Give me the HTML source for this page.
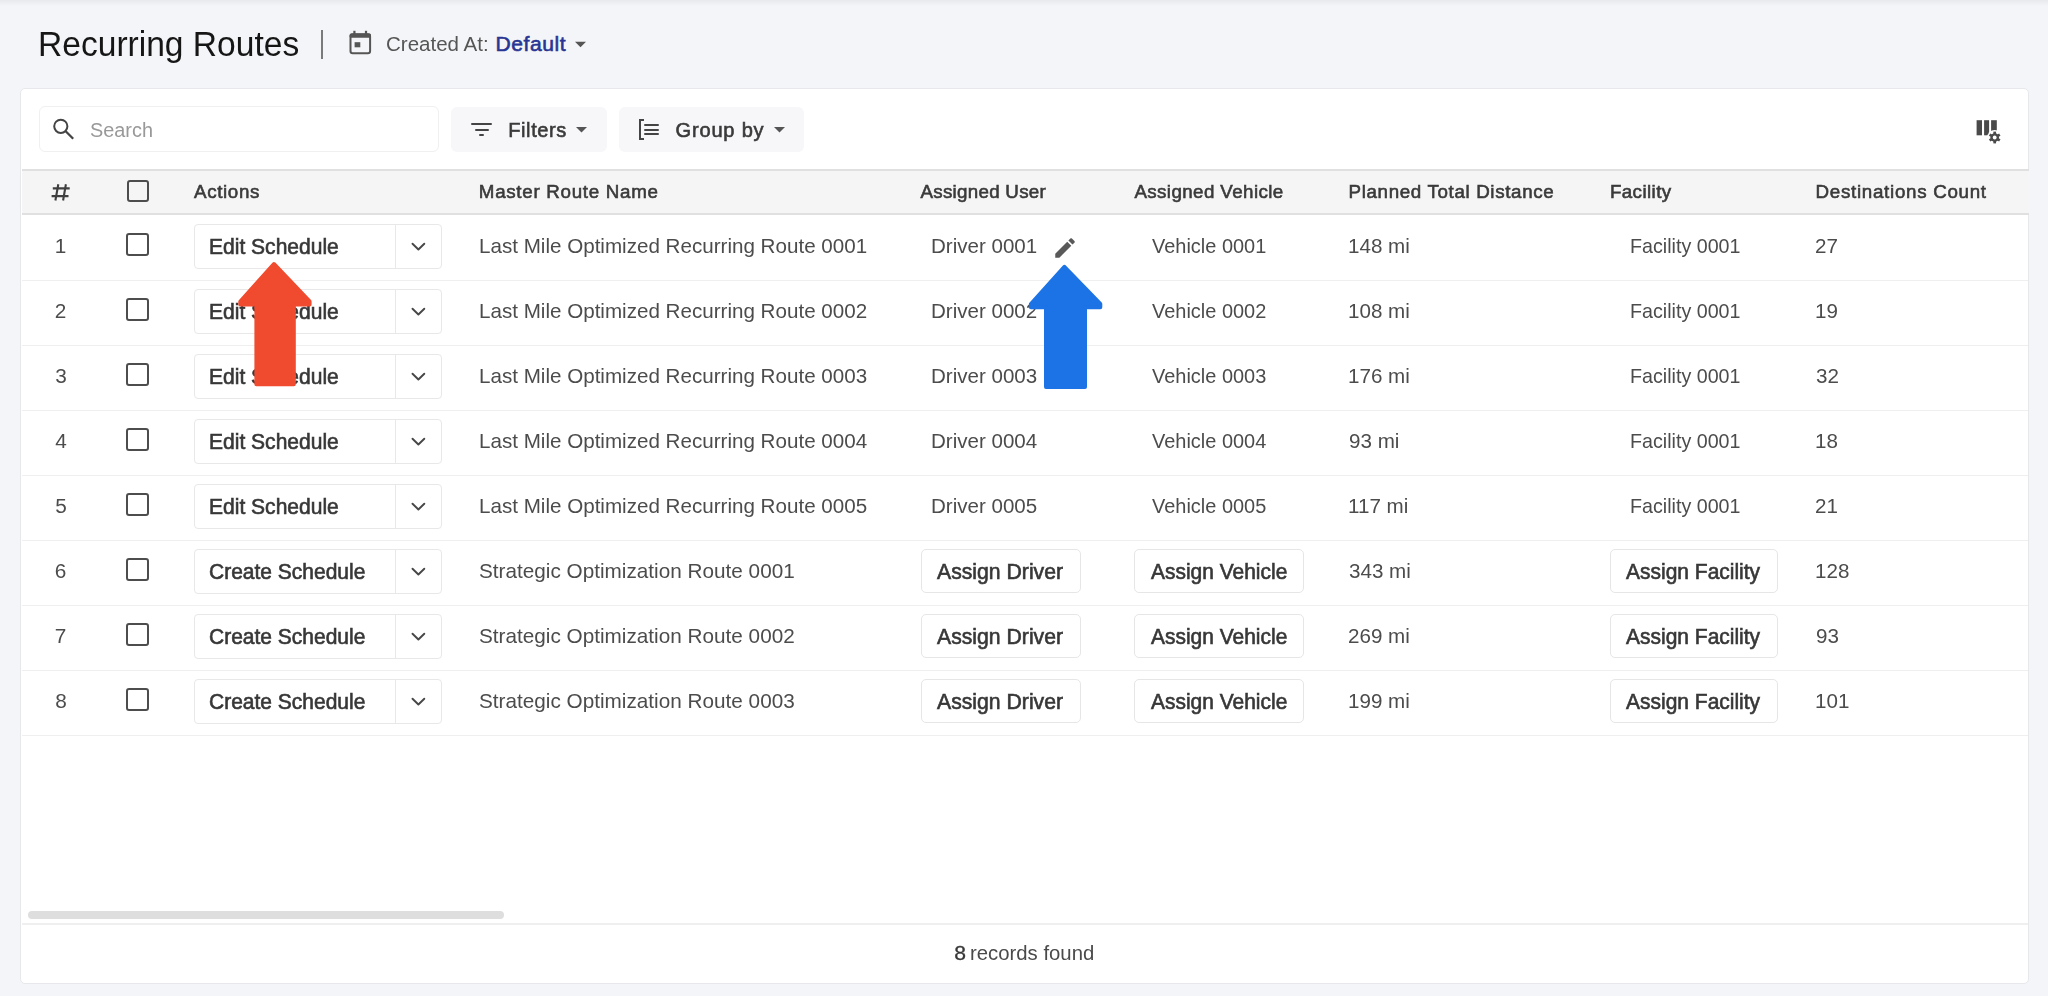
<!DOCTYPE html>
<html><head><meta charset="utf-8">
<style>
html,body{margin:0;padding:0}
body{width:2048px;height:996px;overflow:hidden;background:#f4f5f8;position:relative;font-family:"Liberation Sans",sans-serif}
.a{position:absolute;box-sizing:border-box}
.t{position:absolute;white-space:nowrap;line-height:0;font-family:"Liberation Sans",sans-serif}
.cb{position:absolute;width:23px;height:23px;border:2px solid #4d4d4d;border-radius:3px;box-sizing:border-box;left:126.5px}
.sb{position:absolute;left:194px;width:248px;height:44.5px;border:1.3px solid #e8e8e8;border-radius:4px;box-sizing:border-box;background:#fff}
.sb i{position:absolute;left:200px;top:0;bottom:0;width:1.3px;background:#e8e8e8}
.ab{position:absolute;height:44px;border:1.3px solid #e6e6e6;border-radius:5px;box-sizing:border-box;background:#fff}
.sep{position:absolute;left:22px;width:2006px;height:1.3px;background:#efefef}
svg{position:absolute;overflow:visible}
</style></head><body>
<!-- header -->
<div class="a" style="left:321px;top:29.5px;width:2px;height:29px;background:#7a7a7a"></div>
<svg style="left:0;top:0" width="400" height="80"><g fill="#555"><rect x="350.5" y="34.3" width="19.6" height="19" rx="2.2" fill="none" stroke="#555" stroke-width="2"/><rect x="349.6" y="33.4" width="21.4" height="4.4" rx="1.5"/><rect x="353.3" y="30.8" width="2.2" height="4"/><rect x="364.9" y="30.8" width="2.2" height="4"/><rect x="354.6" y="42.2" width="5.7" height="5.1"/></g></svg>
<svg style="left:575px;top:41px" width="11" height="7" viewBox="0 0 10 5"><path fill="#555" d="M0 0h10L5 5z"/></svg>
<!-- card -->
<div class="a" style="left:0;top:0;width:2048px;height:6px;background:linear-gradient(#e8e9ed,#f4f5f8)"></div>
<div class="a" style="left:20px;top:87.6px;width:2008.5px;height:896.4px;background:#fff;border:1.6px solid #e7e8ec;border-radius:5px"></div>
<!-- search -->
<div class="a" style="left:39px;top:106px;width:400px;height:46px;border:1.3px solid #f0f0f2;border-radius:6px;background:#fff"></div>
<svg style="left:0;top:0" width="100" height="160"><circle cx="60.8" cy="126.3" r="6.6" fill="none" stroke="#444" stroke-width="2"/><path d="M65.7 131.2 L73.2 138.7" stroke="#444" stroke-width="2.3"/></svg>
<!-- filters -->
<div class="a" style="left:451px;top:106.5px;width:156px;height:45px;border-radius:6px;background:#f7f7fa"></div>
<div class="a" style="left:471px;top:122.6px;width:21.2px;height:2px;background:#444;border-radius:1px"></div>
<div class="a" style="left:474.8px;top:128.5px;width:14.1px;height:2px;background:#444;border-radius:1px"></div>
<div class="a" style="left:479.4px;top:134.4px;width:4.7px;height:2px;background:#444;border-radius:1px"></div>
<svg style="left:575.8px;top:127.2px" width="11" height="5.5" viewBox="0 0 10 5"><path fill="#555" d="M0 0h10L5 5z"/></svg>
<!-- group by -->
<div class="a" style="left:619px;top:106.5px;width:185px;height:45px;border-radius:6px;background:#f7f7fa"></div>
<div class="a" style="left:639.3px;top:119.2px;width:2.1px;height:20.6px;background:#444"></div>
<div class="a" style="left:639px;top:119.3px;width:5px;height:2px;background:#444"></div>
<div class="a" style="left:639px;top:138.3px;width:5px;height:2px;background:#444"></div>
<div class="a" style="left:644.2px;top:123.8px;width:15.3px;height:1.9px;background:#444;border-radius:1px"></div>
<div class="a" style="left:644.2px;top:128.7px;width:15.3px;height:1.9px;background:#444;border-radius:1px"></div>
<div class="a" style="left:644.2px;top:133.3px;width:15.3px;height:1.9px;background:#444;border-radius:1px"></div>
<svg style="left:773.7px;top:127.2px" width="11" height="5.5" viewBox="0 0 10 5"><path fill="#555" d="M0 0h10L5 5z"/></svg>
<!-- column settings icon -->
<svg style="left:0;top:0" width="2048" height="200">
<rect x="1976.6" y="120.2" width="5.4" height="15.1" fill="#4a4a4a"/>
<rect x="1984.1" y="120.2" width="5" height="15.1" fill="#4a4a4a"/>
<rect x="1991.1" y="120.2" width="5.7" height="15.1" fill="#4a4a4a"/>
<circle cx="1994.7" cy="137.5" r="7.6" fill="#fff"/>
<g transform="translate(1994.7,137.5)" fill="#4a4a4a">
<circle r="4.3"/>
<rect x="-1.35" y="-5.9" width="2.7" height="11.8"/>
<rect x="-1.35" y="-5.9" width="2.7" height="11.8" transform="rotate(60)"/>
<rect x="-1.35" y="-5.9" width="2.7" height="11.8" transform="rotate(120)"/>
<circle r="1.9" fill="#fff"/>
</g>
</svg>
<!-- table header -->
<div class="a" style="left:21.5px;top:169px;width:2007px;height:46px;background:#f5f5f5;border-top:2px solid #e0e0e0;border-bottom:2px solid #e0e0e0"></div>
<div class="cb" style="top:179.7px;left:126.7px;width:22px;height:22px"></div>
<div class="sep" style="top:279.6px"></div>
<div class="cb" style="top:232.8px;left:126.3px"></div>
<div class="sb" style="top:224.3px"><i></i></div>
<svg style="left:411px;top:241.5px" width="15" height="10" viewBox="0 0 15 10"><path d="M1.5 1.7 L7.4 7.5 L13.3 1.7" fill="none" stroke="#474747" stroke-width="1.9" stroke-linecap="round" stroke-linejoin="round"/></svg>
<div class="sep" style="top:344.6px"></div>
<div class="cb" style="top:297.8px;left:126.3px"></div>
<div class="sb" style="top:289.3px"><i></i></div>
<svg style="left:411px;top:306.5px" width="15" height="10" viewBox="0 0 15 10"><path d="M1.5 1.7 L7.4 7.5 L13.3 1.7" fill="none" stroke="#474747" stroke-width="1.9" stroke-linecap="round" stroke-linejoin="round"/></svg>
<div class="sep" style="top:409.6px"></div>
<div class="cb" style="top:362.8px;left:126.3px"></div>
<div class="sb" style="top:354.3px"><i></i></div>
<svg style="left:411px;top:371.5px" width="15" height="10" viewBox="0 0 15 10"><path d="M1.5 1.7 L7.4 7.5 L13.3 1.7" fill="none" stroke="#474747" stroke-width="1.9" stroke-linecap="round" stroke-linejoin="round"/></svg>
<div class="sep" style="top:474.6px"></div>
<div class="cb" style="top:427.8px;left:126.3px"></div>
<div class="sb" style="top:419.3px"><i></i></div>
<svg style="left:411px;top:436.5px" width="15" height="10" viewBox="0 0 15 10"><path d="M1.5 1.7 L7.4 7.5 L13.3 1.7" fill="none" stroke="#474747" stroke-width="1.9" stroke-linecap="round" stroke-linejoin="round"/></svg>
<div class="sep" style="top:539.6px"></div>
<div class="cb" style="top:492.8px;left:126.3px"></div>
<div class="sb" style="top:484.3px"><i></i></div>
<svg style="left:411px;top:501.5px" width="15" height="10" viewBox="0 0 15 10"><path d="M1.5 1.7 L7.4 7.5 L13.3 1.7" fill="none" stroke="#474747" stroke-width="1.9" stroke-linecap="round" stroke-linejoin="round"/></svg>
<div class="sep" style="top:604.6px"></div>
<div class="cb" style="top:557.8px;left:126.3px"></div>
<div class="sb" style="top:549.3px"><i></i></div>
<svg style="left:411px;top:566.5px" width="15" height="10" viewBox="0 0 15 10"><path d="M1.5 1.7 L7.4 7.5 L13.3 1.7" fill="none" stroke="#474747" stroke-width="1.9" stroke-linecap="round" stroke-linejoin="round"/></svg>
<div class="ab" style="left:920.5px;width:160px;top:548.8px"></div>
<div class="ab" style="left:1134.3px;width:169.5px;top:548.8px"></div>
<div class="ab" style="left:1609.8px;width:168px;top:548.8px"></div>
<div class="sep" style="top:669.6px"></div>
<div class="cb" style="top:622.8px;left:126.3px"></div>
<div class="sb" style="top:614.3px"><i></i></div>
<svg style="left:411px;top:631.5px" width="15" height="10" viewBox="0 0 15 10"><path d="M1.5 1.7 L7.4 7.5 L13.3 1.7" fill="none" stroke="#474747" stroke-width="1.9" stroke-linecap="round" stroke-linejoin="round"/></svg>
<div class="ab" style="left:920.5px;width:160px;top:613.8px"></div>
<div class="ab" style="left:1134.3px;width:169.5px;top:613.8px"></div>
<div class="ab" style="left:1609.8px;width:168px;top:613.8px"></div>
<div class="sep" style="top:734.6px"></div>
<div class="cb" style="top:687.8px;left:126.3px"></div>
<div class="sb" style="top:679.3px"><i></i></div>
<svg style="left:411px;top:696.5px" width="15" height="10" viewBox="0 0 15 10"><path d="M1.5 1.7 L7.4 7.5 L13.3 1.7" fill="none" stroke="#474747" stroke-width="1.9" stroke-linecap="round" stroke-linejoin="round"/></svg>
<div class="ab" style="left:920.5px;width:160px;top:678.8px"></div>
<div class="ab" style="left:1134.3px;width:169.5px;top:678.8px"></div>
<div class="ab" style="left:1609.8px;width:168px;top:678.8px"></div>
<svg style="left:0;top:0" width="100" height="220"><g stroke="#3f3f3f" stroke-width="2.1"><path d="M58.3 184.3 L55.4 200.5 M65.9 184.3 L63.1 200.5 M52.8 188.4 H69.7 M51.6 196.1 H68.5"/></g></svg>
<svg style="left:1051.9px;top:234.7px" width="26" height="26" viewBox="0 0 24 24"><path fill="#595959" d="M3 17.25V21h3.75L17.81 9.94l-3.75-3.75L3 17.25zM20.71 7.04c.39-.39.39-1.02 0-1.41l-2.34-2.34c-.39-.39-1.02-.39-1.41 0l-1.83 1.83 3.75 3.75 1.83-1.83z"/></svg>
<!-- scrollbar -->
<div class="a" style="left:28px;top:910.7px;width:476px;height:8.3px;border-radius:4.2px;background:#dedede"></div>
<div class="a" style="left:22px;top:923.3px;width:2006px;height:1.8px;background:#efefef"></div>
<div style="position:absolute;left:0;top:0;width:2048px;height:996px;filter:grayscale(1)"><div class="t" style="left:37.60px;top:43.73px;font-size:35.40px;color:#161616;transform:scaleX(0.9487);transform-origin:0 0">Recurring Routes</div>
<div class="t" style="left:386.03px;top:44.00px;font-size:21.08px;color:#555555;transform:scaleX(0.9734);transform-origin:0 0">Created At:</div>
<div class="t" style="left:90.20px;top:130.35px;font-size:20.35px;color:#999999;transform:scaleX(0.9771);transform-origin:0 0">Search</div>
<div class="t" style="left:508.30px;top:129.95px;font-size:20.06px;color:#3a3a3a;-webkit-text-stroke:0.60px #3a3a3a;letter-spacing:0.559px">Filters</div>
<div class="t" style="left:675.60px;top:129.95px;font-size:20.06px;color:#3a3a3a;-webkit-text-stroke:0.60px #3a3a3a;letter-spacing:0.795px">Group by</div>
<div class="t" style="left:954.30px;top:952.50px;font-size:21.08px;color:#383838;-webkit-text-stroke:0.35px #383838;letter-spacing:0.000px">8</div>
<div class="t" style="left:969.64px;top:952.50px;font-size:21.08px;color:#4a4a4a;transform:scaleX(0.9641);transform-origin:0 0">records found</div>
<div class="t" style="left:194.00px;top:192.00px;font-size:18.75px;color:#3a3a3a;-webkit-text-stroke:0.60px #3a3a3a;letter-spacing:0.648px">Actions</div>
<div class="t" style="left:478.80px;top:192.00px;font-size:18.75px;color:#3a3a3a;-webkit-text-stroke:0.60px #3a3a3a;letter-spacing:0.716px">Master Route Name</div>
<div class="t" style="left:920.50px;top:192.00px;font-size:18.75px;color:#3a3a3a;-webkit-text-stroke:0.60px #3a3a3a;letter-spacing:0.276px">Assigned User</div>
<div class="t" style="left:1134.40px;top:192.00px;font-size:18.75px;color:#3a3a3a;-webkit-text-stroke:0.60px #3a3a3a;letter-spacing:0.402px">Assigned Vehicle</div>
<div class="t" style="left:1348.50px;top:192.00px;font-size:18.75px;color:#3a3a3a;-webkit-text-stroke:0.60px #3a3a3a;letter-spacing:0.654px">Planned Total Distance</div>
<div class="t" style="left:1609.90px;top:192.00px;font-size:18.75px;color:#3a3a3a;-webkit-text-stroke:0.60px #3a3a3a;letter-spacing:0.420px">Facility</div>
<div class="t" style="left:1815.60px;top:192.00px;font-size:18.75px;color:#3a3a3a;-webkit-text-stroke:0.60px #3a3a3a;letter-spacing:0.705px">Destinations Count</div>
<div class="t" style="left:54.84px;top:246.20px;font-size:20.78px;color:#4c4c4c;letter-spacing:0.000px">1</div>
<div class="t" style="left:208.51px;top:246.65px;font-size:21.22px;color:#373737;-webkit-text-stroke:0.60px #373737;transform:scaleX(0.9912);transform-origin:0 0">Edit Schedule</div>
<div class="t" style="left:479.41px;top:246.20px;font-size:20.78px;color:#4c4c4c;transform:scaleX(0.9920);transform-origin:0 0">Last Mile Optimized Recurring Route 0001</div>
<div class="t" style="left:931.21px;top:246.20px;font-size:20.78px;color:#4c4c4c;transform:scaleX(0.9888);transform-origin:0 0">Driver 0001</div>
<div class="t" style="left:1151.80px;top:246.20px;font-size:20.78px;color:#4c4c4c;transform:scaleX(0.9613);transform-origin:0 0">Vehicle 0001</div>
<div class="t" style="left:1629.65px;top:246.20px;font-size:20.78px;color:#4c4c4c;transform:scaleX(0.9476);transform-origin:0 0">Facility 0001</div>
<div class="t" style="left:1348.31px;top:246.20px;font-size:20.78px;color:#4c4c4c;transform:scaleX(0.9920);transform-origin:0 0">148 mi</div>
<div class="t" style="left:1815.31px;top:246.20px;font-size:20.78px;color:#4c4c4c;transform:scaleX(0.9920);transform-origin:0 0">27</div>
<div class="t" style="left:54.84px;top:311.20px;font-size:20.78px;color:#4c4c4c;letter-spacing:0.000px">2</div>
<div class="t" style="left:208.51px;top:311.65px;font-size:21.22px;color:#373737;-webkit-text-stroke:0.60px #373737;transform:scaleX(0.9912);transform-origin:0 0">Edit Schedule</div>
<div class="t" style="left:479.41px;top:311.20px;font-size:20.78px;color:#4c4c4c;transform:scaleX(0.9920);transform-origin:0 0">Last Mile Optimized Recurring Route 0002</div>
<div class="t" style="left:931.21px;top:311.20px;font-size:20.78px;color:#4c4c4c;transform:scaleX(0.9888);transform-origin:0 0">Driver 0002</div>
<div class="t" style="left:1151.80px;top:311.20px;font-size:20.78px;color:#4c4c4c;transform:scaleX(0.9613);transform-origin:0 0">Vehicle 0002</div>
<div class="t" style="left:1629.65px;top:311.20px;font-size:20.78px;color:#4c4c4c;transform:scaleX(0.9476);transform-origin:0 0">Facility 0001</div>
<div class="t" style="left:1348.31px;top:311.20px;font-size:20.78px;color:#4c4c4c;transform:scaleX(0.9920);transform-origin:0 0">108 mi</div>
<div class="t" style="left:1815.31px;top:311.20px;font-size:20.78px;color:#4c4c4c;transform:scaleX(0.9920);transform-origin:0 0">19</div>
<div class="t" style="left:55.34px;top:376.20px;font-size:20.78px;color:#4c4c4c;letter-spacing:0.000px">3</div>
<div class="t" style="left:208.51px;top:376.65px;font-size:21.22px;color:#373737;-webkit-text-stroke:0.60px #373737;transform:scaleX(0.9912);transform-origin:0 0">Edit Schedule</div>
<div class="t" style="left:479.41px;top:376.20px;font-size:20.78px;color:#4c4c4c;transform:scaleX(0.9920);transform-origin:0 0">Last Mile Optimized Recurring Route 0003</div>
<div class="t" style="left:931.21px;top:376.20px;font-size:20.78px;color:#4c4c4c;transform:scaleX(0.9888);transform-origin:0 0">Driver 0003</div>
<div class="t" style="left:1151.80px;top:376.20px;font-size:20.78px;color:#4c4c4c;transform:scaleX(0.9613);transform-origin:0 0">Vehicle 0003</div>
<div class="t" style="left:1629.65px;top:376.20px;font-size:20.78px;color:#4c4c4c;transform:scaleX(0.9476);transform-origin:0 0">Facility 0001</div>
<div class="t" style="left:1348.31px;top:376.20px;font-size:20.78px;color:#4c4c4c;transform:scaleX(0.9920);transform-origin:0 0">176 mi</div>
<div class="t" style="left:1816.30px;top:376.20px;font-size:20.78px;color:#4c4c4c;transform:scaleX(0.9920);transform-origin:0 0">32</div>
<div class="t" style="left:55.34px;top:441.20px;font-size:20.78px;color:#4c4c4c;letter-spacing:0.000px">4</div>
<div class="t" style="left:208.51px;top:441.65px;font-size:21.22px;color:#373737;-webkit-text-stroke:0.60px #373737;transform:scaleX(0.9912);transform-origin:0 0">Edit Schedule</div>
<div class="t" style="left:479.41px;top:441.20px;font-size:20.78px;color:#4c4c4c;transform:scaleX(0.9920);transform-origin:0 0">Last Mile Optimized Recurring Route 0004</div>
<div class="t" style="left:931.21px;top:441.20px;font-size:20.78px;color:#4c4c4c;transform:scaleX(0.9888);transform-origin:0 0">Driver 0004</div>
<div class="t" style="left:1151.80px;top:441.20px;font-size:20.78px;color:#4c4c4c;transform:scaleX(0.9613);transform-origin:0 0">Vehicle 0004</div>
<div class="t" style="left:1629.65px;top:441.20px;font-size:20.78px;color:#4c4c4c;transform:scaleX(0.9476);transform-origin:0 0">Facility 0001</div>
<div class="t" style="left:1349.30px;top:441.20px;font-size:20.78px;color:#4c4c4c;transform:scaleX(0.9920);transform-origin:0 0">93 mi</div>
<div class="t" style="left:1815.31px;top:441.20px;font-size:20.78px;color:#4c4c4c;transform:scaleX(0.9920);transform-origin:0 0">18</div>
<div class="t" style="left:55.34px;top:506.20px;font-size:20.78px;color:#4c4c4c;letter-spacing:0.000px">5</div>
<div class="t" style="left:208.51px;top:506.65px;font-size:21.22px;color:#373737;-webkit-text-stroke:0.60px #373737;transform:scaleX(0.9912);transform-origin:0 0">Edit Schedule</div>
<div class="t" style="left:479.41px;top:506.20px;font-size:20.78px;color:#4c4c4c;transform:scaleX(0.9920);transform-origin:0 0">Last Mile Optimized Recurring Route 0005</div>
<div class="t" style="left:931.21px;top:506.20px;font-size:20.78px;color:#4c4c4c;transform:scaleX(0.9888);transform-origin:0 0">Driver 0005</div>
<div class="t" style="left:1151.80px;top:506.20px;font-size:20.78px;color:#4c4c4c;transform:scaleX(0.9613);transform-origin:0 0">Vehicle 0005</div>
<div class="t" style="left:1629.65px;top:506.20px;font-size:20.78px;color:#4c4c4c;transform:scaleX(0.9476);transform-origin:0 0">Facility 0001</div>
<div class="t" style="left:1348.31px;top:506.20px;font-size:20.78px;color:#4c4c4c;transform:scaleX(0.9920);transform-origin:0 0">117 mi</div>
<div class="t" style="left:1815.31px;top:506.20px;font-size:20.78px;color:#4c4c4c;transform:scaleX(0.9920);transform-origin:0 0">21</div>
<div class="t" style="left:54.84px;top:571.20px;font-size:20.78px;color:#4c4c4c;letter-spacing:0.000px">6</div>
<div class="t" style="left:208.51px;top:571.65px;font-size:21.22px;color:#373737;-webkit-text-stroke:0.60px #373737;transform:scaleX(0.9894);transform-origin:0 0">Create Schedule</div>
<div class="t" style="left:479.40px;top:571.20px;font-size:20.78px;color:#4c4c4c;transform:scaleX(0.9983);transform-origin:0 0">Strategic Optimization Route 0001</div>
<div class="t" style="left:937.30px;top:571.65px;font-size:21.22px;color:#373737;-webkit-text-stroke:0.60px #373737;transform:scaleX(0.9992);transform-origin:0 0">Assign Driver</div>
<div class="t" style="left:1151.40px;top:571.65px;font-size:21.22px;color:#373737;-webkit-text-stroke:0.60px #373737;transform:scaleX(0.9876);transform-origin:0 0">Assign Vehicle</div>
<div class="t" style="left:1626.00px;top:571.65px;font-size:21.22px;color:#373737;-webkit-text-stroke:0.60px #373737;transform:scaleX(0.9890);transform-origin:0 0">Assign Facility</div>
<div class="t" style="left:1349.30px;top:571.20px;font-size:20.78px;color:#4c4c4c;transform:scaleX(0.9920);transform-origin:0 0">343 mi</div>
<div class="t" style="left:1815.31px;top:571.20px;font-size:20.78px;color:#4c4c4c;transform:scaleX(0.9920);transform-origin:0 0">128</div>
<div class="t" style="left:54.84px;top:636.20px;font-size:20.78px;color:#4c4c4c;letter-spacing:0.000px">7</div>
<div class="t" style="left:208.51px;top:636.65px;font-size:21.22px;color:#373737;-webkit-text-stroke:0.60px #373737;transform:scaleX(0.9894);transform-origin:0 0">Create Schedule</div>
<div class="t" style="left:479.40px;top:636.20px;font-size:20.78px;color:#4c4c4c;transform:scaleX(0.9983);transform-origin:0 0">Strategic Optimization Route 0002</div>
<div class="t" style="left:937.30px;top:636.65px;font-size:21.22px;color:#373737;-webkit-text-stroke:0.60px #373737;transform:scaleX(0.9992);transform-origin:0 0">Assign Driver</div>
<div class="t" style="left:1151.40px;top:636.65px;font-size:21.22px;color:#373737;-webkit-text-stroke:0.60px #373737;transform:scaleX(0.9876);transform-origin:0 0">Assign Vehicle</div>
<div class="t" style="left:1626.00px;top:636.65px;font-size:21.22px;color:#373737;-webkit-text-stroke:0.60px #373737;transform:scaleX(0.9890);transform-origin:0 0">Assign Facility</div>
<div class="t" style="left:1348.31px;top:636.20px;font-size:20.78px;color:#4c4c4c;transform:scaleX(0.9920);transform-origin:0 0">269 mi</div>
<div class="t" style="left:1816.30px;top:636.20px;font-size:20.78px;color:#4c4c4c;transform:scaleX(0.9920);transform-origin:0 0">93</div>
<div class="t" style="left:55.34px;top:701.20px;font-size:20.78px;color:#4c4c4c;letter-spacing:0.000px">8</div>
<div class="t" style="left:208.51px;top:701.65px;font-size:21.22px;color:#373737;-webkit-text-stroke:0.60px #373737;transform:scaleX(0.9894);transform-origin:0 0">Create Schedule</div>
<div class="t" style="left:479.40px;top:701.20px;font-size:20.78px;color:#4c4c4c;transform:scaleX(0.9983);transform-origin:0 0">Strategic Optimization Route 0003</div>
<div class="t" style="left:937.30px;top:701.65px;font-size:21.22px;color:#373737;-webkit-text-stroke:0.60px #373737;transform:scaleX(0.9992);transform-origin:0 0">Assign Driver</div>
<div class="t" style="left:1151.40px;top:701.65px;font-size:21.22px;color:#373737;-webkit-text-stroke:0.60px #373737;transform:scaleX(0.9876);transform-origin:0 0">Assign Vehicle</div>
<div class="t" style="left:1626.00px;top:701.65px;font-size:21.22px;color:#373737;-webkit-text-stroke:0.60px #373737;transform:scaleX(0.9890);transform-origin:0 0">Assign Facility</div>
<div class="t" style="left:1348.31px;top:701.20px;font-size:20.78px;color:#4c4c4c;transform:scaleX(0.9920);transform-origin:0 0">199 mi</div>
<div class="t" style="left:1815.31px;top:701.20px;font-size:20.78px;color:#4c4c4c;transform:scaleX(0.9920);transform-origin:0 0">101</div></div><div class="t" style="left:495.50px;top:44.00px;font-size:21.08px;color:#283593;-webkit-text-stroke:0.60px #283593;letter-spacing:0.562px">Default</div>
<svg style="left:0;top:0" width="2048" height="996">
<path fill="#f04a2f" stroke="#f04a2f" stroke-width="4" stroke-linejoin="round" d="M273.9 264 L309.6 301.5 L309.6 304.5 L293.8 304.5 L293.8 384.3 L256.4 384.3 L256.4 304.5 L240.3 304.5 L240.3 301.5 Z"/>
<path fill="#1b73e5" stroke="#1b73e5" stroke-width="4" stroke-linejoin="round" d="M1064.4 266.8 L1100.3 304 L1100.3 307.2 L1085 307.2 L1085 387 L1046 387 L1046 307.2 L1030.9 307.2 L1030.9 304 Z"/>
</svg>
</body></html>
